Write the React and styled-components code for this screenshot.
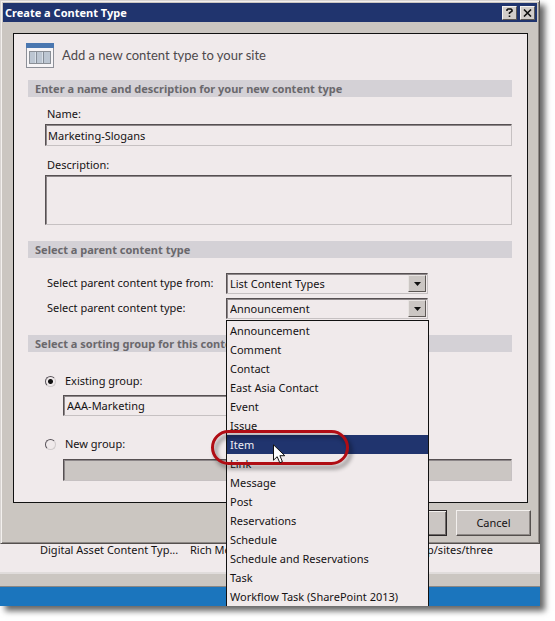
import React, { useState } from 'react';
import styled, { createGlobalStyle } from 'styled-components';

const GlobalStyle = createGlobalStyle`
  * {
    box-sizing: border-box;
  }

  body {
    margin: 0;
    background: #fff;
    color: #151214;
    font-family: 'Noto Sans', 'Open Sans', sans-serif;
    font-size: 11px;
    line-height: 16px;
  }

  input, select, textarea, button {
    font: inherit;
    color: inherit;
    border-radius: 0;
    outline: none;
  }
`;

const Screen = styled.div`
  margin: 0 15px 15px 0;
  background: #f0eaeb;
  box-shadow: 5px 5px 6px rgba(0, 0, 0, 0.6);
`;

const Dialog = styled.form`
  display: flex;
  flex-direction: column;
  padding: 1px;
  background: #cbc6c1;
  border: 1px solid;
  border-color: #d8d4d2 #55504e #55504e #d8d4d2;
  box-shadow: inset 1px 1px #f3f0ee, inset -1px -1px #8e8986;
`;

const TitleBar = styled.header`
  display: flex;
  align-items: center;
  gap: 3px;
  height: 19px;
  margin: 1px;
  padding: 0 2px;
  background: #20346e;
`;

const Title = styled.h1`
  flex: 1;
  margin: 0;
  color: #fff;
  font-size: 11px;
  font-weight: 700;
  line-height: 18px;
`;

const CaptionButton = styled.button`
  display: flex;
  align-items: center;
  justify-content: center;
  width: 15px;
  height: 14px;
  padding: 0;
  background: #d2cdca;
  border: 1px solid;
  border-color: #f5f2f0 #5d5855 #5d5855 #f5f2f0;
`;

const Panel = styled.div`
  margin: 10px 10px 0 11px;
  padding: 8px 15px 5px 14px;
  background: #f0eaeb;
  border: 1px solid #111;
`;

const Banner = styled.div`
  display: flex;
  align-items: center;
  gap: 8px;
  height: 38px;
  padding-bottom: 12px;
  margin-left: -2px;
`;

const BannerText = styled.h2`
  margin: 0;
  color: #4d494b;
  font-family: Lato, 'Noto Sans', sans-serif;
  font-size: 13px;
  font-weight: 400;
  line-height: 20px;
`;

const SectionTitle = styled.h3`
  margin: 0;
  padding: 0 7px;
  background: #d4d1d6;
  color: #6a686c;
  font-size: 11px;
  font-weight: 700;
  line-height: 17px;
`;

const Fields = styled.div`
  display: flex;
  flex-direction: column;
  gap: ${props => props.$gap || 0}px;
  padding: ${props => props.$pad} 0 16px 17px;
`;

const Label = styled.label`
  display: block;
  padding: 0 0 2px 2px;
  line-height: 16px;
`;

const sunken = `
  border: 1px solid;
  border-color: #565052 #c6c1c2 #c6c1c2 #565052;
  box-shadow: inset 1px 1px #8d8789;
`;

const TextInput = styled.input`
  display: block;
  width: 100%;
  height: 22px;
  padding: 0 2px;
  background: #f0eaeb;
  ${sunken}

  &:disabled {
    background: #cbc6c3;
  }
`;

const TextArea = styled.textarea`
  display: block;
  width: 100%;
  height: 50px;
  padding: 2px;
  background: #f0eaeb;
  resize: none;
  ${sunken}
`;

const ComboRow = styled.div`
  display: grid;
  grid-template-columns: 181px 202px;
  align-items: center;
`;

const Combo = styled.div`
  position: relative;
  display: flex;
  height: 21px;
  padding: 1px;
  background: #f0eaeb;
  ${sunken}
`;

const Select = styled.select`
  flex: 1;
  min-width: 0;
  padding: 0 2px;
  background: transparent;
  border: 0;
  appearance: none;
`;

const ComboArrow = styled.span`
  display: flex;
  align-items: center;
  justify-content: center;
  width: 18px;
  background: #cbc6c3;
  border: 1px solid;
  border-color: #e8e4e2 #5d5855 #5d5855 #e8e4e2;
  pointer-events: none;
`;

const DropList = styled.ul`
  position: absolute;
  z-index: 2;
  top: 21px;
  left: -1px;
  width: 203px;
  margin: 0;
  padding: 0;
  list-style: none;
  background: #f0eaeb;
  border: 1px solid #111;
  border-bottom: 0;
`;

const DropItem = styled.li`
  position: relative;
  z-index: ${props => (props.$active ? 1 : 'auto')};
  padding: 0 3px;
  line-height: 19px;
  white-space: nowrap;
  background: ${props => (props.$active ? '#20346e' : 'transparent')};
  color: ${props => (props.$active ? '#eeeef4' : 'inherit')};
`;

const Highlight = styled.span`
  position: absolute;
  top: -5px;
  left: -16px;
  width: 138px;
  height: 35px;
  border: 3px solid #b00d14;
  border-radius: 18px;
  filter: drop-shadow(3px 4px 2px rgba(0, 0, 0, 0.45));
  pointer-events: none;
`;

const Pointer = styled.svg`
  position: absolute;
  top: 9px;
  left: 46px;
`;

const RadioLabel = styled.label`
  display: flex;
  align-items: center;
  gap: 9px;
  height: 22px;
`;

const Radio = styled.input`
  width: 11px;
  height: 11px;
  margin: 0;
  appearance: none;
  border: 1px solid;
  border-color: #59545a #cfcacb #cfcacb #59545a;
  border-radius: 50% !important;
  background: #f0eaeb;

  &:checked {
    background: radial-gradient(circle, #111 2px, #f0eaeb 3px);
  }
`;

const GroupField = styled.div`
  max-width: ${props => props.$width || 'none'};
  margin: 3px 0 17px 18px;

  &:last-child {
    margin: 4px 0 0 18px;
  }
`;

const ButtonRow = styled.div`
  display: flex;
  justify-content: flex-end;
  gap: 9px;
  padding: 7px 7px 6px;
`;

const PushButton = styled.button`
  width: 75px;
  height: 26px;
  padding: 0;
  background: #cbc6c3;
  border: 1px solid;
  border-color: #f3f0ee #55504e #55504e #f3f0ee;
  box-shadow: inset -1px -1px #8e8986;
  ${props => props.$primary && 'border-color: #2b2728; box-shadow: inset 1px 1px #f3f0ee, inset -1px -1px #6e6967;'}
`;

const Row = styled.div`
  display: grid;
  grid-template-columns: 150px 1fr auto;
  height: 28px;
  padding: 0 47px 0 40px;
  line-height: 12px;
`;

const ScrollStrip = styled.div`
  height: 15px;
  background: #cbc6c1;
  border-top: 2px solid #e0dcdb;
  border-bottom: 1px solid #8a8784;
`;

const DesktopStrip = styled.div`
  height: 19px;
  background: #1b75bd;
`;

const contentTypes = [
  'Announcement',
  'Comment',
  'Contact',
  'East Asia Contact',
  'Event',
  'Issue',
  'Item',
  'Link',
  'Message',
  'Post',
  'Reservations',
  'Schedule',
  'Schedule and Reservations',
  'Task',
  'Workflow Task (SharePoint 2013)',
];

const ListIcon = () => (
  <svg width="28" height="25" viewBox="0 0 28 25" aria-hidden="true">
    <rect x="0.5" y="0.5" width="27" height="24" fill="#f7f5f7" stroke="#8d9098" />
    <rect width="28" height="5" fill="#4a77b0" />
    <rect x="3.5" y="8.5" width="21" height="12" fill="#bcc6d2" stroke="#8b9097" />
    <path d="M10.5 9v11M17.5 9v11" stroke="#858d98" />
    <path d="M9.5 9v11M16.5 9v11" stroke="#d9e0e8" />
  </svg>
);

const DownArrow = () => (
  <ComboArrow>
    <svg width="7" height="4" viewBox="0 0 7 4" aria-hidden="true">
      <path d="M0 0h7L3.5 4z" fill="#111" />
    </svg>
  </ComboArrow>
);

const MousePointer = () => (
  <Pointer width="13" height="20" viewBox="0 0 13 20" aria-hidden="true">
    <path
      d="M0.5 0.8V16.2L4.2 12.7L6.8 18.8L9.4 17.6L6.9 11.7H11.8Z"
      fill="#fff"
      stroke="#111"
    />
  </Pointer>
);

const App = () => {
  const [group, setGroup] = useState('existing');
  const [parent, setParent] = useState('Announcement');

  return (
    <>
      <GlobalStyle />
      <Screen>
        <Dialog onSubmit={e => e.preventDefault()}>
          <TitleBar>
            <Title>Create a Content Type</Title>
            <CaptionButton type="button" aria-label="Help">
              <svg width="7" height="9" viewBox="0 0 7 9">
                <path d="M1 3V1.8L2 1H5L6 2V3L3.5 5V6M3.5 7.4V9" fill="none" stroke="#111" strokeWidth="1.6" />
              </svg>
            </CaptionButton>
            <CaptionButton type="button" aria-label="Close">
              <svg width="9" height="8" viewBox="0 0 9 8">
                <path d="M1 0.5L8 7.5M8 0.5L1 7.5" stroke="#111" strokeWidth="1.6" />
              </svg>
            </CaptionButton>
          </TitleBar>

          <Panel>
            <Banner>
              <ListIcon />
              <BannerText>Add a new content type to your site</BannerText>
            </Banner>

            <SectionTitle>Enter a name and description for your new content type</SectionTitle>
            <Fields $gap={11} $pad="9px">
              <div>
                <Label htmlFor="name">Name:</Label>
                <TextInput id="name" defaultValue="Marketing-Slogans" />
              </div>
              <div>
                <Label htmlFor="description">Description:</Label>
                <TextArea id="description" />
              </div>
            </Fields>

            <SectionTitle>Select a parent content type</SectionTitle>
            <Fields $gap={4} $pad="15px">
              <ComboRow>
                <Label htmlFor="source">Select parent content type from:</Label>
                <Combo>
                  <Select id="source">
                    <option>List Content Types</option>
                  </Select>
                  <DownArrow />
                </Combo>
              </ComboRow>
              <ComboRow>
                <Label htmlFor="parent">Select parent content type:</Label>
                <Combo>
                  <Select id="parent" value={parent} onChange={e => setParent(e.target.value)}>
                    {contentTypes.map(type => (
                      <option key={type}>{type}</option>
                    ))}
                  </Select>
                  <DownArrow />
                  <DropList role="listbox" aria-label="Parent content type">
                    {contentTypes.map(type => (
                      <DropItem
                        key={type}
                        role="option"
                        aria-selected={type === 'Item'}
                        $active={type === 'Item'}
                        onClick={() => setParent(type)}
                      >
                        {type}
                        {type === 'Item' && (
                          <>
                            <Highlight />
                            <MousePointer />
                          </>
                        )}
                      </DropItem>
                    ))}
                  </DropList>
                </Combo>
              </ComboRow>
            </Fields>

            <SectionTitle>Select a sorting group for this content type</SectionTitle>
            <Fields $pad="18px">
              <RadioLabel>
                <Radio
                  type="radio"
                  name="group"
                  checked={group === 'existing'}
                  onChange={() => setGroup('existing')}
                />
                Existing group:
              </RadioLabel>
              <GroupField $width="364px">
                <Combo>
                  <Select aria-label="Existing group">
                    <option>AAA-Marketing</option>
                  </Select>
                  <DownArrow />
                </Combo>
              </GroupField>
              <RadioLabel>
                <Radio
                  type="radio"
                  name="group"
                  checked={group === 'new'}
                  onChange={() => setGroup('new')}
                />
                New group:
              </RadioLabel>
              <GroupField>
                <TextInput aria-label="New group" disabled={group !== 'new'} />
              </GroupField>
            </Fields>
          </Panel>

          <ButtonRow>
            <PushButton type="submit" $primary>OK</PushButton>
            <PushButton type="button">Cancel</PushButton>
          </ButtonRow>
        </Dialog>

        <Row>
          <span>Digital Asset Content Typ...</span>
          <span>Rich Media</span>
          <span>http://sp/sites/three</span>
        </Row>
        <ScrollStrip />
        <DesktopStrip />
      </Screen>
    </>
  );
};

export default App;
